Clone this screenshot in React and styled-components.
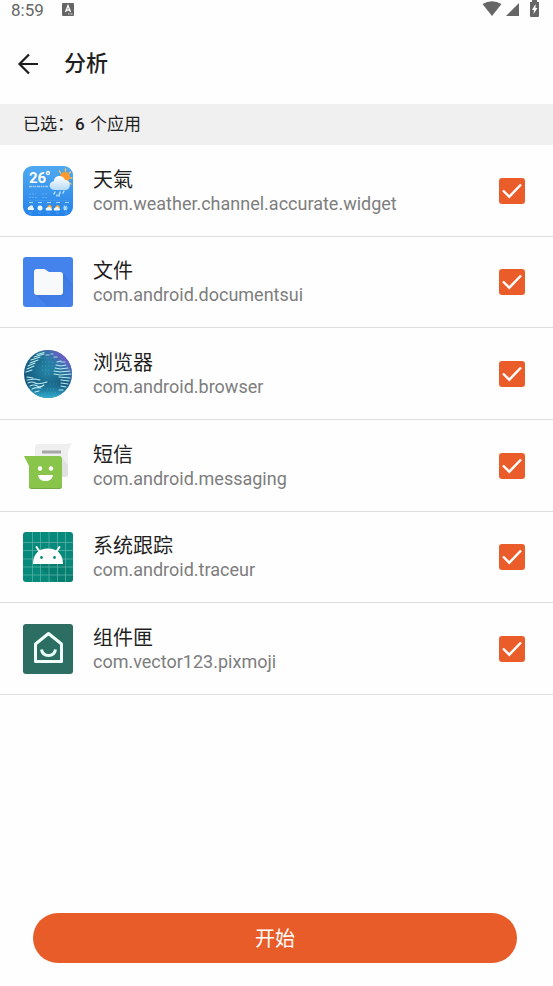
import React, { useState } from 'react';
import styled, { createGlobalStyle } from 'styled-components';

const GlobalStyle = createGlobalStyle`
  * { box-sizing: border-box; }
  body {
    margin: 0;
    background: #fefefe;
    color: #1f1f1f;
    font-family: Roboto, "Noto Sans CJK SC", sans-serif;
  }
`;

const Screen = styled.div`
  display: flex;
  flex-direction: column;
  min-height: 100vh;
`;

const StatusBar = styled.div`
  display: flex;
  align-items: center;
  height: 20px;
  padding: 0 13px 0 11px;
  color: #666;
  font-size: 17px;
  line-height: 20px;
`;

const InputBadge = styled.svg`
  width: 12px;
  height: 13px;
  margin: 0 auto 2px 18px;
`;

const StatusIcons = styled.svg`
  width: 58px;
  height: 18px;
  margin-bottom: 2px;
`;

const Header = styled.header`
  display: flex;
  align-items: center;
  gap: 24px;
  height: 84px;
  padding: 4px 16px 0;
`;

const BackButton = styled.button`
  display: flex;
  padding: 0;
  border: 0;
  background: none;
  color: #1c1c1c;
  cursor: pointer;
`;

const Title = styled.h1`
  margin: 0;
  font-size: 22px;
  font-weight: 500;
  line-height: 32px;
`;

const Summary = styled.div`
  padding: 0 23px;
  background: #f0f0f0;
  font-size: 17px;
  line-height: 41px;
`;

const Count = styled.strong`
  padding: 0 1px;
  font-weight: 500;
`;

const AppList = styled.ul`
  margin: 0;
  padding: 0;
  list-style: none;
`;

const AppItem = styled.li`
  height: 92px;
  border-bottom: 1px solid #dedede;

  &:nth-child(3n + 2) {
    height: 91px;
  }
`;

const AppLabel = styled.label`
  display: flex;
  align-items: center;
  height: 100%;
  padding: 0 28px 0 23px;
  cursor: pointer;
`;

const AppIcon = styled.svg`
  flex: none;
  width: 50px;
  height: 50px;
  margin-right: 20px;
`;

const AppText = styled.span`
  display: flex;
  flex-direction: column;
  flex: 1;
  min-width: 0;
`;

const AppName = styled.span`
  font-size: 20px;
  line-height: 26px;
`;

const PackageName = styled.span`
  color: #7d7d7d;
  font-size: 18px;
  line-height: 22px;
`;

const CheckFrame = styled.span`
  display: grid;
  flex: none;
  width: 26px;
  height: 26px;

  > * {
    grid-area: 1 / 1;
  }
`;

const Checkbox = styled.input`
  appearance: none;
  width: 26px;
  height: 26px;
  margin: 0;
  border: 2px solid #ea5d2a;
  border-radius: 3px;
  background: transparent;
  cursor: pointer;

  &:checked {
    background: #ea5d2a;
  }
`;

const Tick = styled.svg`
  width: 26px;
  height: 26px;
  pointer-events: none;
`;

const Footer = styled.footer`
  margin-top: auto;
  padding: 24px 36px 23px 33px;
`;

const StartButton = styled.button`
  display: block;
  width: 100%;
  height: 50px;
  padding: 0 0 2px;
  border: 0;
  border-radius: 25px;
  background: #e85c29;
  color: #fff;
  font-family: inherit;
  font-size: 20px;
  cursor: pointer;
`;

function WeatherArt() {
  return (
    <>
      <defs>
        <linearGradient id="sky" x1="0" y1="0" x2="0" y2="1">
          <stop offset="0" stopColor="#4fa9f0" />
          <stop offset="1" stopColor="#2583ea" />
        </linearGradient>
        <linearGradient id="cloud" x1="0" y1="0" x2="0" y2="1">
          <stop offset="0" stopColor="#fff" />
          <stop offset="1" stopColor="#b7dcfa" />
        </linearGradient>
      </defs>
      <rect width="50" height="50" rx="9" fill="url(#sky)" />
      <text x="6" y="17" fill="#fff" fontFamily="Roboto, sans-serif" fontSize="15" fontWeight="700">26</text>
      <circle cx="25" cy="7" r="1.5" fill="none" stroke="#fff" strokeWidth="1.3" />
      <path d="M6 20.5H25" stroke="#9dcdf8" strokeWidth="1.4" strokeDasharray="3 .6 1.3 .5 2 .7" />
      <g stroke="#ffc54a" strokeWidth="1.4" strokeLinecap="round">
        <path d="M36.500 5L37.500 7M42.500 3V5M47.500 6l-1.300 1.300M49 12h-1.500M46.500 17l1.500 1" />
      </g>
      <circle cx="42" cy="11" r="5" fill="#ff9a2c" />
      <path d="M32 24c-7 0-7-8-1-9 0-6 9-7 11-1 6-1 7 10 0 10z" fill="url(#cloud)" />
      <path d="M32 26l-1 2M37 26l-1 4M41 25l-1 2M34 29v1" stroke="#b6e0ff" strokeWidth="1.5" strokeLinecap="round" />
      <path d="M6 28H13M6 31.500H15M19 28H25M19 31.500H25" stroke="#6bb4f5" strokeWidth=".8" strokeDasharray="2 1" />
      <path d="M5 34.5H45" stroke="#4c9fee" strokeWidth=".6" />
      <path d="M6 36.5H46" stroke="#a9d4fb" strokeWidth="1" strokeDasharray="4 5" />
      <g fill="#ffad35">
        <circle cx="26.5" cy="41.2" r="2.2" />
        <circle cx="34.5" cy="41.4" r="2.2" />
      </g>
      <g fill="#edf8ff">
        <path d="M5 44c-1-3 1-3 2-4 2-2 4 1 3 2 2 0 1 3-1 2zM23 44.5c-1-3 1-3 2-3 2-1 3 0 3 1 2 0 1 2 0 2zM31 44.5c-1-2 1-3 2-3 2-1 3 0 3 1 2 0 1 2 0 2z" />
        <circle cx="17" cy="42" r="2.5" />
      </g>
      <path d="M39.8 42h5M41 39.8l2.5 4.4M43.5 39.8L41 44.2" stroke="#b8e3ff" strokeWidth="1.2" />
      <path d="M6 47H46" stroke="#5ba9f3" strokeWidth=".8" strokeDasharray="3 6" />
    </>
  );
}

function FilesArt() {
  return (
    <>
      <defs>
        <linearGradient id="folderShade" x1="0" y1="0" x2="1" y2="1">
          <stop offset="0" stopColor="#3067cc" />
          <stop offset="1" stopColor="#427fe9" />
        </linearGradient>
      </defs>
      <rect width="50" height="50" rx="3" fill="#4583ec" />
      <path d="M11 36l14 14h22q3 0 3-3V27L40 16z" fill="url(#folderShade)" opacity=".55" />
      <path d="M11 15q0-3 3-3h7q1 0 2 1l3 2h11q3 0 3 3v17q0 3-3 3H14q-3 0-3-3z" fill="#f8f9fa" />
    </>
  );
}

function GlobeArt() {
  return (
    <>
      <defs>
        <radialGradient id="ocean" cx=".48" cy=".42" r=".58">
          <stop offset="0" stopColor="#2686a7" />
          <stop offset=".65" stopColor="#196285" />
          <stop offset="1" stopColor="#164b75" />
        </radialGradient>
        <linearGradient id="rim" x1=".25" y1=".8" x2=".85" y2=".15">
          <stop offset=".55" stopColor="#26a3c4" stopOpacity="0" />
          <stop offset="1" stopColor="#735ac8" />
        </linearGradient>
        <linearGradient id="glow" x1="0" y1="0" x2="0" y2="1">
          <stop offset=".7" stopColor="#27a5c8" stopOpacity="0" />
          <stop offset="1" stopColor="#33b4d5" />
        </linearGradient>
      </defs>
      <circle cx="25" cy="25" r="24" fill="url(#ocean)" />
      <circle cx="25" cy="25" r="24" fill="url(#rim)" />
      <circle cx="25" cy="25" r="24" fill="url(#glow)" />
      <path d="M18 9H33M19 13H31M19 17H30M19 21H29M22 25H28M27 35H34M24 40H34M22 44H33" stroke="#5ac1d5" strokeDasharray="1 2.2" opacity=".5" />
      <g fill="none" stroke="#b9ebef" strokeWidth="1.1" strokeLinecap="round">
        <path d="M14 5.500l7-2M11 8l10-3M8 11l9-3M7 14l8-3M5 17l7-3M4 20l7-3M3 23l6-2" />
        <path d="M4 28l6 1M4 31l8-1 5 1M5 34q4-2 7 0t12-1M7 37q4-2 7 0t7-1M9 40q4-2 9-1M12 43l4-1" />
        <path d="M34 13l4-1M33 16l5 1 5-1M32 19l5 1 8-1M31 22l6 1 10-1M31 25l6 1 11-1M36 28l11 1M38 31l8 1M38 34l7 1M38 37l5 1M36 41l4 0" />
      </g>
      <path d="M23 6h3M31 8h3M28 5h2M38 13h4" stroke="#b8cfec" strokeWidth="1.2" strokeLinecap="round" />
    </>
  );
}

function MessagingArt() {
  return (
    <>
      <path d="M15 3H42L49 2 45 10V33q0 3-3 3H15q-3 0-3-3V6q0-3 3-3z" fill="#efefef" />
      <path d="M38 16L45 24v9q0 3-3 3h-4z" fill="#e1e1e1" />
      <path d="M19 11H38" stroke="#a7a7a7" strokeWidth="3" />
      <path d="M1 15H36q3 0 3 3V45q0 3-3 3H9q-3 0-3-3V25z" fill="#89c54b" />
      <path d="M6 44q0 3 3 3h27q3 0 3-3v1q0 3-3 3H9q-3 0-3-3z" fill="#75ab42" />
      <g fill="#fff">
        <circle cx="17" cy="27.5" r="2.2" />
        <circle cx="28" cy="27.5" r="2.2" />
        <path d="M15 34H30q-1 6-7.5 6T15 34z" />
      </g>
    </>
  );
}

function TraceArt() {
  return (
    <>
      <rect width="50" height="50" rx="3" fill="#07897b" />
      <path d="M14 32l18 18h15q3 0 3-3V42L40 27z" fill="#057568" opacity=".55" />
      <path d="M9.5 0V50M17.5 0V50M26 0V50M34.5 0V50M42.5 0V50M0 10.5H50M0 18.5H50M0 27H50M0 35H50M0 43H50" stroke="#66b6ac" strokeWidth=".7" />
      <path d="M10 32C10 22 16 16.500 25 16.500S40 22 40 32z" fill="#fff" />
      <path d="M13.500 15l4 6M36.500 15l-4 6" stroke="#fff" strokeWidth="2" strokeLinecap="round" />
      <circle cx="18.500" cy="25.500" r="1.400" fill="#07897b" />
      <circle cx="31.500" cy="25.500" r="1.400" fill="#07897b" />
    </>
  );
}

function HouseArt() {
  return (
    <>
      <rect width="50" height="50" rx="3" fill="#2c6e61" />
      <path d="M12.500 20L25.500 9.500 38.500 20V37.500H12.500z" fill="none" stroke="#f1fffb" strokeWidth="3" strokeLinejoin="round" />
      <path d="M18.500 25.500q1 6 7 6t7-6" fill="none" stroke="#e9fff7" strokeWidth="3" />
    </>
  );
}

const apps = [
  { name: '天氣', id: 'com.weather.channel.accurate.widget', Art: WeatherArt },
  { name: '文件', id: 'com.android.documentsui', Art: FilesArt },
  { name: '浏览器', id: 'com.android.browser', Art: GlobeArt },
  { name: '短信', id: 'com.android.messaging', Art: MessagingArt },
  { name: '系统跟踪', id: 'com.android.traceur', Art: TraceArt },
  { name: '组件匣', id: 'com.vector123.pixmoji', Art: HouseArt },
];

export default function App() {
  const [selected, setSelected] = useState(apps.map((app) => app.id));
  const toggle = (id) =>
    setSelected((current) =>
      current.includes(id) ? current.filter((item) => item !== id) : [...current, id]
    );

  return (
    <Screen>
      <GlobalStyle />
      <StatusBar>
        <span>8:59</span>
        <InputBadge viewBox="0 0 12 13" aria-hidden="true">
          <rect width="12" height="13" rx="1" fill="#666" />
          <path d="M3.500 9L6 2.500 8.500 9M4.500 7H7.500" fill="none" stroke="#fff" strokeWidth="1.300" />
          <path d="M6 11H11" stroke="#ddd" strokeDasharray="1 .5" />
        </InputBadge>
        <StatusIcons viewBox="0 0 58 18" fill="#666" aria-hidden="true">
          <path d="M.5 4Q10-1.500 19.500 4L10 16z" />
          <path d="M37 3V16H24z" />
          <path d="M48 2h2V0h5v2h2v14q0 1-1 1h-7q-1 0-1-1z" />
          <path d="M53.500 4L50 10h2l-.5 4 4-6h-2z" fill="#fff" />
        </StatusIcons>
      </StatusBar>
      <Header>
        <BackButton type="button" aria-label="返回">
          <svg width="24" height="24" viewBox="0 0 24 24" fill="none" stroke="currentColor" strokeWidth="2.200" aria-hidden="true">
            <path d="M22 12H4M13 2.500L3.500 12 13 21.500" />
          </svg>
        </BackButton>
        <Title>分析</Title>
      </Header>
      <main>
        <Summary>
          已选：<Count>{selected.length}</Count> 个应用
        </Summary>
        <AppList>
          {apps.map(({ name, id, Art }) => (
            <AppItem key={id}>
              <AppLabel>
                <AppIcon viewBox="0 0 50 50" aria-hidden="true">
                  <Art />
                </AppIcon>
                <AppText>
                  <AppName>{name}</AppName>
                  <PackageName>{id}</PackageName>
                </AppText>
                <CheckFrame>
                  <Checkbox type="checkbox" checked={selected.includes(id)} onChange={() => toggle(id)} />
                  <Tick viewBox="0 0 26 26" fill="none" stroke="#fff" strokeWidth="2.400" aria-hidden="true">
                    <path d="M4 12.500L10.300 18.700 22 6.500" />
                  </Tick>
                </CheckFrame>
              </AppLabel>
            </AppItem>
          ))}
        </AppList>
      </main>
      <Footer>
        <StartButton type="button">开始</StartButton>
      </Footer>
    </Screen>
  );
}
